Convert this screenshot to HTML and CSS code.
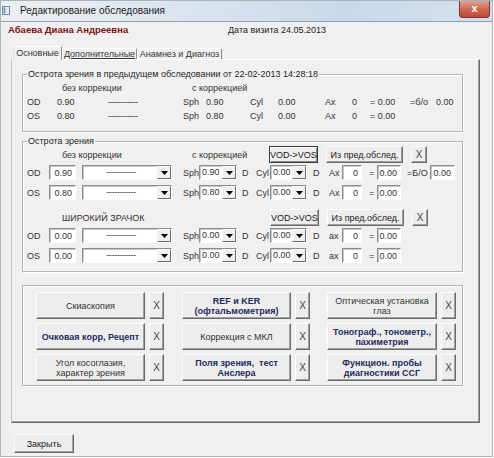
FILE: index.html
```html
<!DOCTYPE html>
<html lang="ru">
<head>
  <meta charset="UTF-8" />
  <title>Редактирование обследования</title>
  <link rel="stylesheet" href="styles.css">
</head>
<body>
  <div class="window">
    <div class="titlebar">
      <svg class="app-icon" width="8" height="9" viewBox="0 0 8 9">
        <rect x="0.5" y="0.5" width="7" height="8" fill="#e8eef5" stroke="#6f8aa8"/>
        <rect x="1.5" y="1.5" width="2" height="6" fill="#7e98b6"/>
      </svg>
      <span class="title">Редактирование обследования</span>
      <div class="close-x">x</div>
    </div>

    <div class="client">
      <div class="patient">
        <span class="name">Абаева Диана Андреевна</span>
        <span class="visit">Дата визита 24.05.2013</span>
      </div>

      <div class="tabs">
        <div class="tab active">Основные</div>
        <div class="tab"><u>Дополнительные</u></div>
        <div class="tab">Анамнез и Диагноз</div>
      </div>

      <div class="panel">
        <!-- previous exam -->
        <fieldset class="group prev">
          <legend>Острота зрения в предыдущем обследовании от 22-02-2013 14:28:18</legend>
          <div class="prow head">
            <span class="c-nocorr">без коррекции</span>
            <span>с коррекцией</span>
          </div>
          <div class="prow">
            <span class="p1">OD</span><span class="p2">0.90</span><span class="p3">-----------</span>
            <span class="p4">Sph</span><span class="p5">0.90</span><span class="p6">Cyl</span><span class="p7">0.00</span>
            <span class="p8">Ax</span><span class="p9">0</span><span class="p10">= 0.00</span><span class="p11">=б/о</span><span>0.00</span>
          </div>
          <div class="prow">
            <span class="p1">OS</span><span class="p2">0.80</span><span class="p3">-----------</span>
            <span class="p4">Sph</span><span class="p5">0.80</span><span class="p6">Cyl</span><span class="p7">0.00</span>
            <span class="p8">Ax</span><span class="p9">0</span><span class="p10">= 0.00</span>
          </div>
        </fieldset>

        <!-- current exam -->
        <fieldset class="group current">
          <legend>Острота зрения</legend>
          <div class="crow head">
            <span class="c-nocorr">без коррекции</span>
            <span class="c-corr">с коррекцией</span>
            <button class="btn vod default">VOD-&gt;VOS</button>
            <button class="btn prev-btn">Из пред.обслед.</button>
            <button class="btn xbtn">X</button>
          </div>
          <div class="crow">
            <span class="eye">OD</span>
            <input class="field va" value="0.90">
            <div class="combo wide"><span class="ctext">-----------</span><span class="arrow"><svg width="7" height="4" viewBox="0 0 7 4"><path d="M0 0h7L3.5 4z" fill="#000"/></svg></span></div>
            <span class="lbl sph">Sph</span>
            <div class="combo sphc"><span class="ctext">0.90</span><span class="arrow"><svg width="7" height="4" viewBox="0 0 7 4"><path d="M0 0h7L3.5 4z" fill="#000"/></svg></span></div>
            <span class="lbl d1">D</span>
            <span class="lbl cyl">Cyl</span>
            <div class="combo cylc"><span class="ctext">0.00</span><span class="arrow"><svg width="7" height="4" viewBox="0 0 7 4"><path d="M0 0h7L3.5 4z" fill="#000"/></svg></span></div>
            <span class="lbl d2">D</span>
            <span class="lbl ax">Ax</span>
            <input class="field axf" value="0">
            <span class="lbl eq">=</span>
            <input class="field res" value="0.00">
            <span class="lbl bo">=Б/О</span>
            <input class="field bof" value="0.00">
          </div>
          <div class="crow">
            <span class="eye">OS</span>
            <input class="field va" value="0.80">
            <div class="combo wide"><span class="ctext">-----------</span><span class="arrow"><svg width="7" height="4" viewBox="0 0 7 4"><path d="M0 0h7L3.5 4z" fill="#000"/></svg></span></div>
            <span class="lbl sph">Sph</span>
            <div class="combo sphc"><span class="ctext">0.80</span><span class="arrow"><svg width="7" height="4" viewBox="0 0 7 4"><path d="M0 0h7L3.5 4z" fill="#000"/></svg></span></div>
            <span class="lbl d1">D</span>
            <span class="lbl cyl">Cyl</span>
            <div class="combo cylc"><span class="ctext">0.00</span><span class="arrow"><svg width="7" height="4" viewBox="0 0 7 4"><path d="M0 0h7L3.5 4z" fill="#000"/></svg></span></div>
            <span class="lbl d2">D</span>
            <span class="lbl ax">Ax</span>
            <input class="field axf" value="0">
            <span class="lbl eq">=</span>
            <input class="field res" value="0.00">
          </div>

          <div class="crow head wide-pupil">
            <span class="c-wide">ШИРОКИЙ ЗРАЧОК</span>
            <button class="btn vod">VOD-&gt;VOS</button>
            <button class="btn prev-btn">Из пред.обслед.</button>
            <button class="btn xbtn">X</button>
          </div>
          <div class="crow">
            <span class="eye">OD</span>
            <input class="field va" value="0.00">
            <div class="combo wide"><span class="ctext">-----------</span><span class="arrow"><svg width="7" height="4" viewBox="0 0 7 4"><path d="M0 0h7L3.5 4z" fill="#000"/></svg></span></div>
            <span class="lbl sph">Sph</span>
            <div class="combo sphc"><span class="ctext">0.00</span><span class="arrow"><svg width="7" height="4" viewBox="0 0 7 4"><path d="M0 0h7L3.5 4z" fill="#000"/></svg></span></div>
            <span class="lbl d1">D</span>
            <span class="lbl cyl">Cyl</span>
            <div class="combo cylc"><span class="ctext">0.00</span><span class="arrow"><svg width="7" height="4" viewBox="0 0 7 4"><path d="M0 0h7L3.5 4z" fill="#000"/></svg></span></div>
            <span class="lbl d2">D</span>
            <span class="lbl ax">ax</span>
            <input class="field axf" value="0">
            <span class="lbl eq">=</span>
            <input class="field res" value="0.00">
          </div>
          <div class="crow">
            <span class="eye">OS</span>
            <input class="field va" value="0.00">
            <div class="combo wide"><span class="ctext">-----------</span><span class="arrow"><svg width="7" height="4" viewBox="0 0 7 4"><path d="M0 0h7L3.5 4z" fill="#000"/></svg></span></div>
            <span class="lbl sph">Sph</span>
            <div class="combo sphc"><span class="ctext">0.00</span><span class="arrow"><svg width="7" height="4" viewBox="0 0 7 4"><path d="M0 0h7L3.5 4z" fill="#000"/></svg></span></div>
            <span class="lbl d1">D</span>
            <span class="lbl cyl">Cyl</span>
            <div class="combo cylc"><span class="ctext">0.00</span><span class="arrow"><svg width="7" height="4" viewBox="0 0 7 4"><path d="M0 0h7L3.5 4z" fill="#000"/></svg></span></div>
            <span class="lbl d2">D</span>
            <span class="lbl ax">ax</span>
            <input class="field axf" value="0">
            <span class="lbl eq">=</span>
            <input class="field res" value="0.00">
          </div>
        </fieldset>

        <!-- sections -->
        <div class="group actions">
          <button class="btn act">Скиаскопия</button>
          <button class="btn xbtn">X</button>
          <button class="btn act strong">REF и KER<br>(офтальмометрия)</button>
          <button class="btn xbtn">X</button>
          <button class="btn act">Оптическая установка<br>глаз</button>
          <button class="btn xbtn">X</button>

          <button class="btn act strong">Очковая корр, Рецепт</button>
          <button class="btn xbtn">X</button>
          <button class="btn act">Коррекция с МКЛ</button>
          <button class="btn xbtn">X</button>
          <button class="btn act strong">Тонограф., тонометр.,<br>пахиметрия</button>
          <button class="btn xbtn">X</button>

          <button class="btn act">Угол косоглазия,<br>характер зрения</button>
          <button class="btn xbtn">X</button>
          <button class="btn act strong">Поля зрения,&nbsp; тест<br>Анслера</button>
          <button class="btn xbtn">X</button>
          <button class="btn act strong">Функцион. пробы<br>диагностики ССГ</button>
          <button class="btn xbtn">X</button>
        </div>
      </div>

      <div class="footer">
        <button class="btn close-btn">Закрыть</button>
      </div>
    </div>
  </div>
</body>
</html>
```

FILE: styles.css
```css
* {
  box-sizing: border-box;
}
body {
  margin: 0;
  background: #fff;
  font-family: 'Liberation Sans', Arial, sans-serif;
  font-size: 9px;
  color: #333;
}
.window {
  width: 493px;
  height: 457px;
  border: 1px solid #a9b3bd;
  background: #f0f0f0;
  display: flex;
  flex-direction: column;
}
.titlebar {
  height: 21px;
  display: flex;
  align-items: flex-start;
  background: linear-gradient(to right, #eceff2 0%, #dce5ee 35%, #c9d9ea 70%, #d3e0ee 100%);
  border-bottom: 1px solid #8da2b8;
}
.app-icon {
  margin: 5px 0 0 1px;
}
.title {
  margin: 4px 0 0 10px;
  font-size: 10px;
  color: #1e1e1e;
}
.close-x {
  margin-left: auto;
  margin-right: 2px;
  width: 31px;
  height: 17px;
  border: 1px solid #7d3328;
  border-top: none;
  border-radius: 0 0 4px 4px;
  background: linear-gradient(#e2a391, #cf6b55 50%, #bd4a35);
  color: #fff;
  font-weight: bold;
  font-size: 11px;
  text-align: center;
  line-height: 14px;
}
.client {
  flex: 1;
  display: flex;
  flex-direction: column;
}
.patient {
  display: flex;
  margin-top: 2px;
  padding-left: 7px;
  height: 12px;
  line-height: 12px;
}
.name {
  width: 220px;
  font-weight: bold;
  font-size: 9.5px;
  color: #7a1414;
}
.visit {
  color: #222;
}

/* tabs */
.tabs {
  display: flex;
  align-items: flex-end;
  margin: 10px 0 -1px 12px;
  height: 14px;
}
.tab {
  height: 12px;
  line-height: 11px;
  text-align: center;
  background: #f0f0f0;
  border: 1px solid;
  border-color: #fff #8a8a8a transparent #fff;
  border-bottom: none;
  color: #333;
}
.tab:nth-child(1) { width: 49px; }
.tab:nth-child(2) { width: 75px; }
.tab:nth-child(3) { width: 85px; }
.tab.active {
  height: 14px;
  line-height: 12px;
  position: relative;
  z-index: 1;
  border-left-color: #e0e0e0;
}
.panel {
  margin-left: 10px;
  width: 469px;
  height: 364px;
  border: 1px solid;
  border-color: #fff #6b6b6b #6b6b6b #c4c4c4;
  box-shadow: inset -1px -1px 0 #a0a0a0;
  padding: 0 0 0 10px;
}

/* group boxes */
.group {
  width: 441px;
  margin: 0;
  border: 1px solid #b4b4b4;
  box-shadow: inset 1px 1px 0 #fff, 1px 1px 0 #fff;
  min-width: 0;
}
fieldset.group {
  padding: 0;
}
.group legend {
  margin-left: 4px;
  padding: 0 1px;
  line-height: 12px;
  color: #222;
}
.prev {
  margin-top: 8px;
  padding-bottom: 8px !important;
}
.prow {
  display: flex;
  height: 14px;
  line-height: 14px;
  padding-left: 4px;
  white-space: nowrap;
}
.prow.head {
  margin-top: 1px;
  padding-left: 39px;
}
.c-nocorr { width: 130px; }
.p1 { width: 30px; }
.p2 { width: 51px; }
.p3 { width: 75px; letter-spacing: -0.3px; }
.p4 { width: 23px; }
.p5 { width: 44px; }
.p6 { width: 28px; }
.p7 { width: 47px; }
.p8 { width: 27px; }
.p9 { width: 18px; }
.p10 { width: 40px; }
.p11 { width: 26px; }

.current {
  margin-top: 3px;
  padding-bottom: 8px !important;
}
.crow {
  display: flex;
  align-items: center;
  height: 15px;
  margin-top: 5px;
  padding-left: 4px;
  white-space: nowrap;
}
.crow.head {
  height: 17px;
  margin-top: -1px;
  padding-left: 39px;
}
.crow.head + .crow {
  margin-top: 2px;
}
.crow.wide-pupil {
  margin-top: 9px;
}
.c-corr { width: 77px; }
.c-wide { width: 208px; }

.eye { width: 22px; }
.field {
  height: 15px;
  padding: 0 3px 0 0;
  margin: 0;
  font: inherit;
  color: #333;
  text-align: right;
  background: #fff;
  border: 1px solid;
  border-color: #8c8c8c #fff #fff #8c8c8c;
  box-shadow: inset 1px 1px 0 #c8c8c8;
  outline: none;
}
.va { width: 27px; }
.axf { width: 20px; }
.res { width: 24px; }
.bof { width: 25px; }
.combo {
  display: flex;
  height: 15px;
  background: #fff;
  border: 1px solid;
  border-color: #8c8c8c #fff #fff #8c8c8c;
  box-shadow: inset 1px 1px 0 #c8c8c8;
}
.combo .ctext {
  flex: 1;
  line-height: 13px;
  padding-left: 2px;
}
.combo.wide { width: 90px; margin-left: 6px; }
.combo.wide .ctext { text-align: center; letter-spacing: -0.3px; }
.sphc { width: 38px; }
.cylc { width: 37px; }
.arrow {
  width: 14px;
  height: 13px;
  display: flex;
  align-items: center;
  justify-content: center;
  background: #f0f0f0;
  border: 1px solid;
  border-color: #f8f8f8 #6b6b6b #6b6b6b #f8f8f8;
}
.lbl { display: inline-block; }
.sph { width: 16px; margin-left: 11px; }
.d1 { width: 19px; padding-left: 5px; }
.cyl { width: 14px; }
.d2 { width: 22px; padding-left: 6px; }
.ax { width: 13px; }
.eq { width: 15px; padding-left: 7px; }
.bo { width: 29px; padding-left: 6px; }

/* buttons */
.btn {
  margin: 0;
  padding: 0;
  font: inherit;
  color: #222;
  background: #ededed;
  border: 1px solid;
  border-color: #fdfdfd #6b6b6b #6b6b6b #fdfdfd;
  box-shadow: inset -1px -1px 0 #a0a0a0;
}
.vod {
  width: 49px;
  height: 17px;
}
.vod.default {
  border-color: #3a3a3a;
  box-shadow: inset 1px 1px 0 #fff, inset -1px -1px 0 #8a8a8a;
}
.prev-btn {
  width: 77px;
  height: 17px;
  margin-left: 8px;
}
.crow .xbtn {
  width: 16px;
  height: 17px;
  margin-left: 8px;
}
.xbtn {
  color: #444;
  font-size: 10px;
}

.actions {
  margin-top: 13px;
  padding: 6px 0 4px 13px;
  display: grid;
  grid-template-columns: 109px 37px 109px 36px 110px 19px;
  grid-auto-rows: 27px;
  row-gap: 4px;
}
.actions .xbtn {
  width: 15px;
  margin-left: 4px;
}
.act {
  line-height: 10px;
  color: #333;
}
.strong {
  font-weight: bold;
  color: #1f2b5e;
}

.footer {
  padding: 11px 0 0 13px;
}
.close-btn {
  width: 60px;
  height: 19px;
  color: #222;
}
```
